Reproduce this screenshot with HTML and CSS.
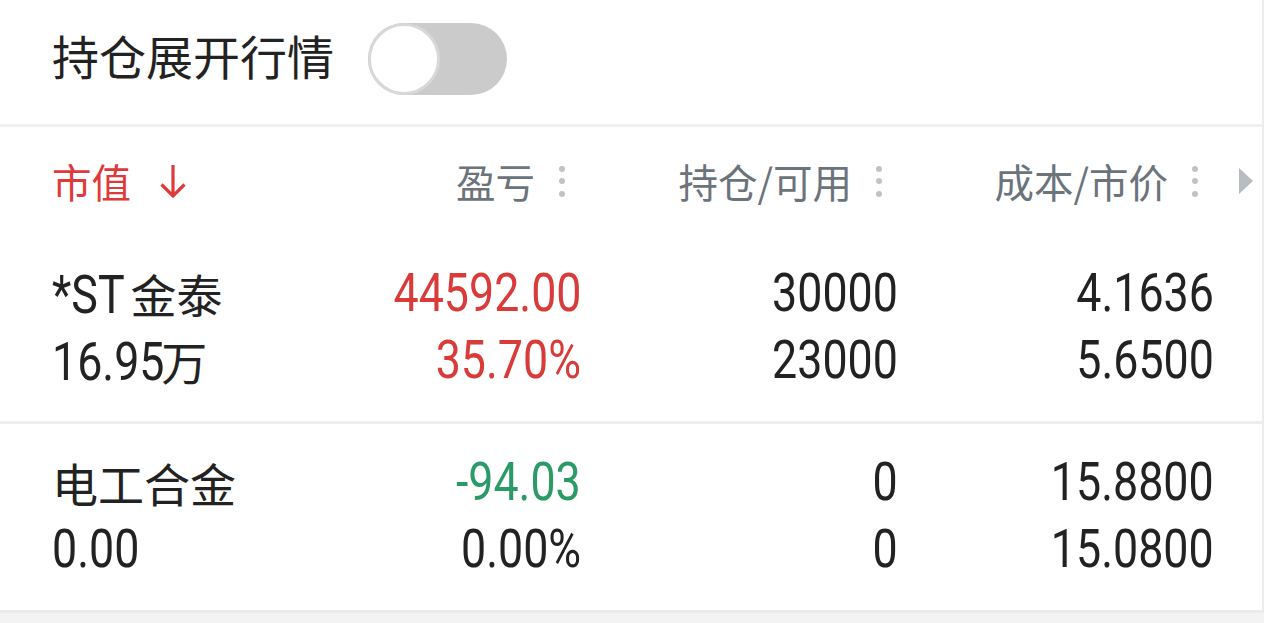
FILE: index.html
```html
<!DOCTYPE html>
<html lang="zh-CN">
<head>
<meta charset="utf-8">
<title>持仓</title>
<link rel="stylesheet" href="styles.css">
</head>
<body>
<div class="page">
  <div class="titlebar">
    <span class="title">持仓展开行情</span>
    <span class="switch"><span class="knob"></span></span>
  </div>

  <div class="grid thead">
    <div class="th sort">
      <span>市值</span>
      <svg class="arrow" width="30" height="36" viewBox="0 0 30 36"><path d="M15 2V33M3.5 21.5L15 33L26.5 21.5" fill="none" stroke="#e0393b" stroke-width="3.2"/></svg>
    </div>
    <div class="th"><span>盈亏</span><span class="dots"><i></i><i></i><i></i></span></div>
    <div class="th"><span>持仓/可用</span><span class="dots"><i></i><i></i><i></i></span></div>
    <div class="th"><span>成本/市价</span><span class="dots"><i></i><i></i><i></i></span></div>
    <div class="th-more"><span class="tri"></span></div>
  </div>

  <div class="grid row">
    <div class="cell left">
      <div class="line"><span class="n n-st">*ST</span><span class="cjk">金泰</span></div>
      <div class="line"><span class="n n-amt">16.95</span><span class="cjk">万</span></div>
    </div>
    <div class="cell up">
      <div class="line"><span class="n">44592.00</span></div>
      <div class="line"><span class="n">35.70%</span></div>
    </div>
    <div class="cell">
      <div class="line"><span class="n">30000</span></div>
      <div class="line"><span class="n">23000</span></div>
    </div>
    <div class="cell">
      <div class="line"><span class="n">4.1636</span></div>
      <div class="line"><span class="n">5.6500</span></div>
    </div>
  </div>

  <div class="grid row last">
    <div class="cell left">
      <div class="line"><span class="cjk">电工合金</span></div>
      <div class="line"><span class="n">0.00</span></div>
    </div>
    <div class="cell">
      <div class="line down"><span class="n">-94.03</span></div>
      <div class="line"><span class="n">0.00%</span></div>
    </div>
    <div class="cell">
      <div class="line"><span class="n">0</span></div>
      <div class="line"><span class="n">0</span></div>
    </div>
    <div class="cell">
      <div class="line"><span class="n">15.8800</span></div>
      <div class="line"><span class="n">15.0800</span></div>
    </div>
  </div>
</div>
</body>
</html>
```

FILE: styles.css
```css
html, body {
  margin: 0;
  padding: 0;
}
body {
  width: 1264px;
  height: 623px;
  overflow: hidden;
  background: #f3f3f3;
  font-family: "Noto Sans CJK SC", "Noto Sans", sans-serif;
  color: #222;
}
.page {
  background: #fff;
  border-right: 2px solid #ececec;
  border-bottom: 3px solid #ebebeb;
}
.titlebar {
  height: 118px;
  padding: 0 0 6px 52px;
  display: flex;
  align-items: center;
  border-bottom: 3px solid #f0f0f0;
}
.title {
  font-size: 47px;
  line-height: 1;
  margin-bottom: 10px;
  color: #222;
}
.switch {
  margin-left: 34px;
  width: 139px;
  height: 72px;
  border-radius: 36px;
  background: #cbcbcb;
  display: flex;
}
.knob {
  width: 66px;
  height: 66px;
  border-radius: 50%;
  background: #fff;
  border: 3px solid #d8d8d8;
}
.grid {
  display: grid;
  grid-template-columns: 248px 281px 317px 316px 1fr;
  padding-left: 52px;
}
.thead {
  height: 108px;
  align-items: center;
}
.th {
  display: flex;
  align-items: center;
  justify-content: flex-end;
  gap: 24px;
  padding-right: 16px;
  font-size: 39.5px;
  line-height: 1;
  color: #6b737b;
}
.th.sort {
  justify-content: flex-start;
  gap: 27px;
  padding-right: 0;
  color: #e0393b;
}
.arrow {
  display: block;
}
.dots {
  display: flex;
  flex-direction: column;
  gap: 6.5px;
}
.dots i {
  display: block;
  width: 6px;
  height: 6px;
  border-radius: 50%;
  background: #bfc3c7;
}
.th-more {
  display: flex;
  align-items: center;
  padding-left: 25px;
}
.tri {
  width: 0;
  height: 0;
  border-left: 14px solid #b7bcc1;
  border-top: 13.5px solid transparent;
  border-bottom: 13.5px solid transparent;
}
.row {
  padding-top: 25px;
  padding-bottom: 27px;
  border-bottom: 3px solid #eeeeee;
}
.row.last {
  border-bottom: none;
}
.cell {
  text-align: right;
  color: #222;
}
.cell.left {
  text-align: left;
}
.line {
  height: 67px;
  line-height: 67px;
  white-space: nowrap;
}
.n {
  display: inline-block;
  font-family: "Roboto", sans-serif;
  font-size: 53px;
  transform: scaleX(0.845);
  transform-origin: right center;
}
.left .n {
  transform-origin: left center;
}
.n-st {
  margin-right: -0.14em;
}
.n-amt {
  margin-right: -0.45em;
}
.cjk {
  font-family: "Noto Sans CJK SC", sans-serif;
  font-size: 46px;
}
.up {
  color: #d93b3b;
}
.down {
  color: #2b9a66;
}
```
